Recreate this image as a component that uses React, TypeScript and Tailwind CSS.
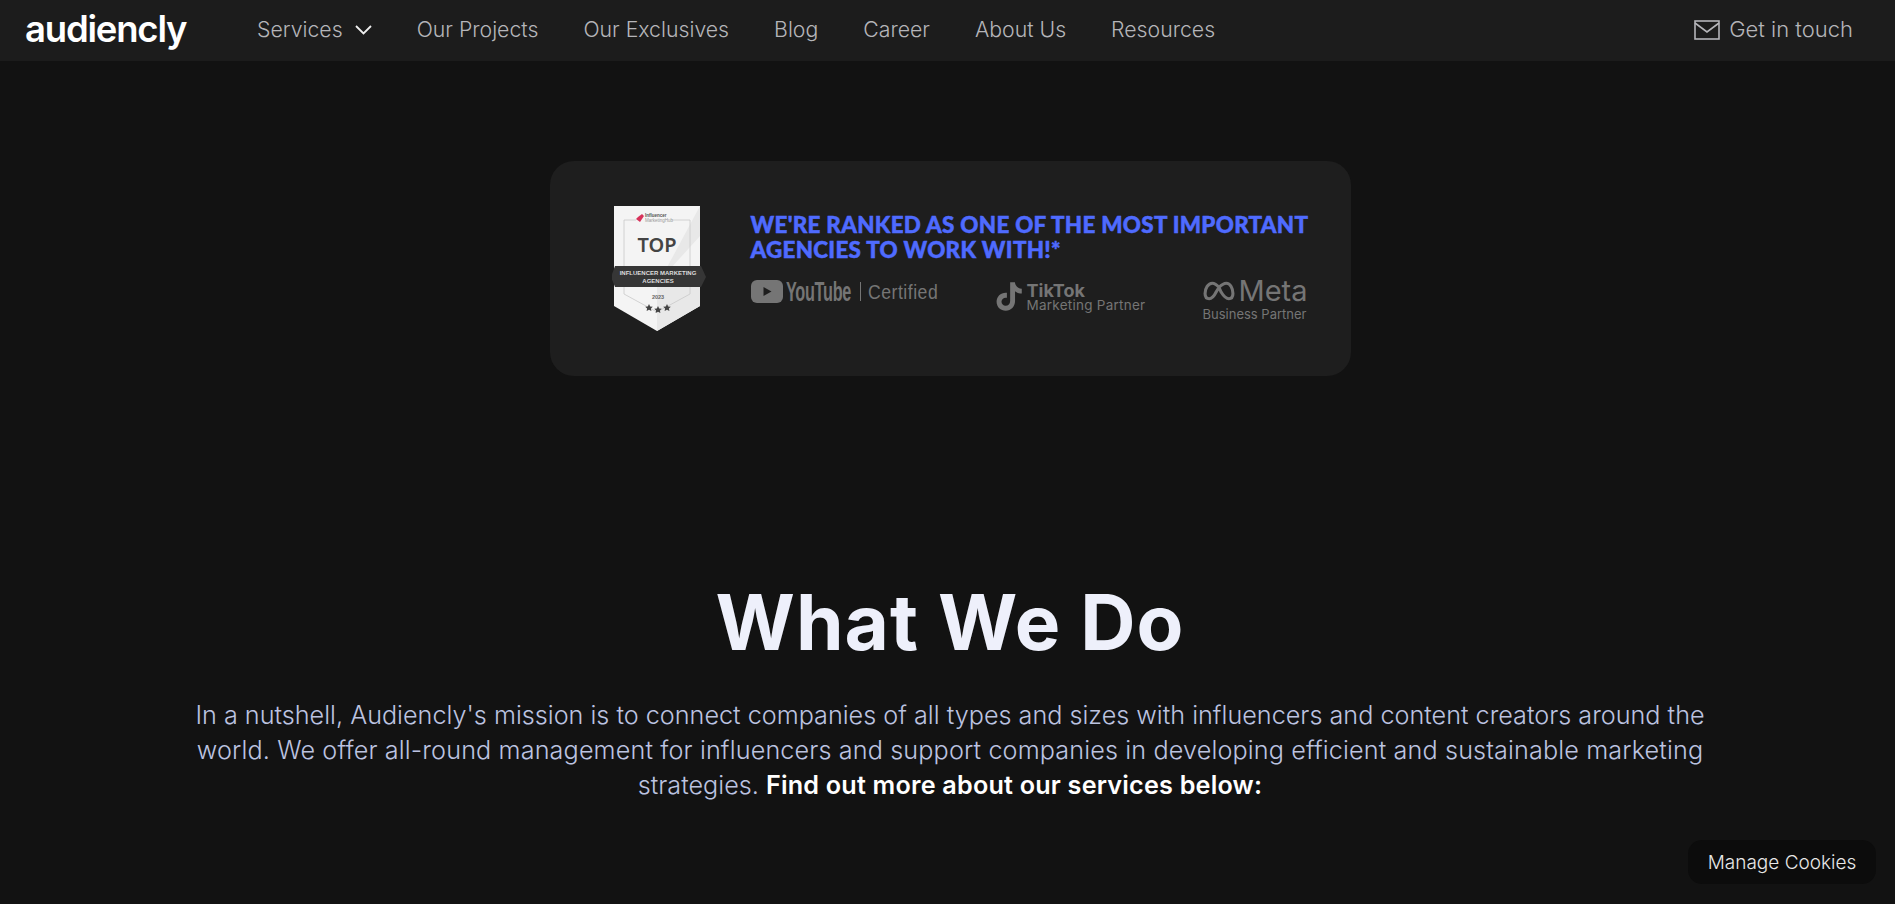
const links = ["Our Projects", "Our Exclusives", "Blog", "Career", "About Us", "Resources"];

const Badge = () => (
  <svg width="94" height="126" viewBox="0 0 94 126" className="shrink-0">
    <path d="M2 0H88V100L45 125L2 100Z" fill="#f4f4f4" />
    <path d="M88 0V30L48 74H88V100L45 125V80Z" fill="#e8e8e8" />
    <path d="M12 14H24M60 14H78V88L45 106L12 88V14" fill="none" stroke="#c9c9c9" strokeWidth="0.8" />
    <path d="M26 11l4-3 2 2-4 6-4-3z" fill="#d8325a" />
    <text x="33" y="11" fontSize="4.500" fill="#555" fontFamily="Liberation Sans, sans-serif" fontWeight="700">Influencer</text>
    <text x="33" y="16" fontSize="4.500" fill="#999" fontFamily="Liberation Sans, sans-serif">MarketingHub</text>
    <text x="45" y="46" fontSize="20" fill="#444" textAnchor="middle" fontFamily="Noto Sans, sans-serif" fontWeight="600">TOP</text>
    <path d="M3 60H89L94 71L89 81H3L-1 71Z" fill="#363636" />
    <text x="46" y="69" fontSize="6" fill="#ddd" textAnchor="middle" fontFamily="Liberation Sans, sans-serif" fontWeight="700">INFLUENCER MARKETING</text>
    <text x="46" y="77" fontSize="6" fill="#ddd" textAnchor="middle" fontFamily="Liberation Sans, sans-serif" fontWeight="700">AGENCIES</text>
    <text x="46" y="93" fontSize="5.500" fill="#666" textAnchor="middle" fontFamily="Liberation Sans, sans-serif" fontWeight="700">2023</text>
    <path d="M37 98l1.200 2.400 2.600.3-1.900 1.800.5 2.600-2.400-1.300-2.400 1.300.5-2.600-1.900-1.800 2.600-.3z" fill="#444" />
    <path d="M46 100l1.200 2.400 2.600.3-1.900 1.800.5 2.600-2.400-1.300-2.400 1.300.5-2.600-1.900-1.800 2.600-.3z" fill="#444" />
    <path d="M55 98l1.200 2.400 2.600.3-1.900 1.800.5 2.600-2.400-1.300-2.400 1.300.5-2.600-1.900-1.800 2.600-.3z" fill="#444" />
  </svg>
);

const Partners = () => (
  <div className="mt-[18px] flex items-start text-[#757575]">
    <div className="flex w-[246px] items-center">
      <svg width="32" height="23" viewBox="0 0 32 23" className="shrink-0">
        <rect width="32" height="23" rx="6" fill="#757575" />
        <path d="M12.500 7v9l8-4.500z" fill="#1e1e1e" />
      </svg>
      <span className="ml-[3px] inline-block w-[65px] origin-left scale-x-[0.58] text-[28px] leading-[23px] font-bold tracking-[-0.5px] whitespace-nowrap font-['Liberation_Sans',sans-serif]">YouTube</span>
      <span className="ml-[9px] h-[19px] w-px shrink-0 bg-[#757575]" />
      <span className="ml-[7px] inline-block w-[70px] origin-left scale-x-[0.84] text-[21px] leading-[23px] whitespace-nowrap tracking-[0.6px] font-['Liberation_Sans',sans-serif]">Certified</span>
    </div>
    <div className="-ml-[3px] flex w-[208px] items-center gap-[2px]">
      <svg width="31" height="31" viewBox="0 0 24 24" fill="#757575" className="shrink-0">
        <path d="M12.500 1h3.700c.3 2.900 2.300 4.800 5.300 5v3.700c-2 0-3.700-.6-5.200-1.700v7.500c0 4.200-3.100 7.500-7.200 7.500-4 0-7.100-3-7.100-7 0-4.200 3.500-7.400 8-6.900v3.900c-2.300-.5-4.200 1-4.200 3 0 1.800 1.400 3.100 3.200 3.100 2 0 3.500-1.500 3.500-3.700z" />
      </svg>
      <div className="pt-[3px]">
        <div className="text-[18px] leading-[15px] font-bold">TikTok</div>
        <div className="text-[13.500px] leading-[15px] tracking-[0.25px]">Marketing Partner</div>
      </div>
    </div>
    <div className="ml-[1px] w-[105px]">
      <div className="flex items-center gap-[4px]">
        <svg width="32" height="20" viewBox="0 0 31 19" fill="none" stroke="#757575" strokeWidth="3" className="shrink-0">
          <path d="M15.500 6C13 3 11 2 9 2 5 2 2 7 2 12c0 3 1.500 5 4 5 3 0 5-3 7-7l2.500-4C18 3.500 20 2 22.500 2 26.500 2 29 7 29 12c0 3-1.500 5-4 5-3 0-5-2.500-7.500-6.500L15.500 6" />
        </svg>
        <span className="text-[29px] leading-[22px]">Meta</span>
      </div>
      <div className="mt-[5px] text-[13px] leading-[15px] whitespace-nowrap">Business Partner</div>
    </div>
  </div>
);

export default function App() {
  return (
    <div className="min-h-[904px] overflow-hidden bg-[#121212] font-['Inter',sans-serif]">
      <nav className="flex h-[61px] items-center bg-[#1c1c1c] pb-[2px] pl-[25px] pr-[42px] font-light text-[#b5b5b9]">
        <span className="w-[232px] text-[36.500px] leading-none font-semibold tracking-[-1.200px] text-white">audiencly</span>
        <div className="flex items-center gap-[45px] text-[21.250px]">
          <span className="flex items-center gap-[12px]">
            Services
            <svg width="17" height="10" viewBox="0 0 17 10" fill="none" stroke="#eeeeee" strokeWidth="1.800">
              <path d="M1 1l7.500 7.500L16 1" />
            </svg>
          </span>
          {links.map((link) => (
            <span key={link}>{link}</span>
          ))}
        </div>
        <div className="ml-auto flex items-center gap-[9px] text-[22px]">
          <svg width="26" height="20" viewBox="0 0 26 20" fill="none" stroke="#b5b5b9" strokeWidth="1.600">
            <rect x="1" y="1" width="24" height="18" />
            <path d="M1 3l12 9 12-9" />
          </svg>
          Get in touch
        </div>
      </nav>

      <main className="flex flex-col items-center pl-[5px] pt-[100px]">
        <section className="flex h-[215px] w-[801px] rounded-[24px] bg-[#1e1e1e] pl-[62px] pt-[45px]">
          <Badge />
          <div className="ml-[45px] w-[570px] pt-[6px]">
            <p className="text-[22.400px] leading-[25px] font-black whitespace-nowrap uppercase tracking-[0.3px] text-[#4f6bff] [-webkit-text-stroke:0.5px_#4f6bff] font-['Lato',sans-serif]">
              We're ranked as one of the most important
              <br />
              agencies to work with!*
            </p>
            <Partners />
          </div>
        </section>

        <h1 className="mt-[202px] text-[76.500px] leading-[88px] font-bold tracking-[1px] text-[#eef0fb]">What We Do</h1>
        <p className="mt-[32px] text-center text-[25.200px] leading-[35px] font-light text-[#bcc3e0]">
          In a nutshell, Audiencly's mission is to connect companies of all types and sizes with influencers and content creators around the
          <br />
          <span className="tracking-[0.13px]">
            world. We offer all-round management for influencers and support companies in developing efficient and sustainable marketing
          </span>
          <br />
          strategies. <strong className="font-semibold tracking-[0.2px] text-white">Find out more about our services below:</strong>
        </p>
      </main>

      <button className="fixed bottom-[20px] right-[19px] h-[44px] w-[188px] rounded-[14px] bg-[#0c0c0c] pt-[2px] text-[19px] font-light text-[#e8e8e8]">
        Manage Cookies
      </button>
    </div>
  );
}
